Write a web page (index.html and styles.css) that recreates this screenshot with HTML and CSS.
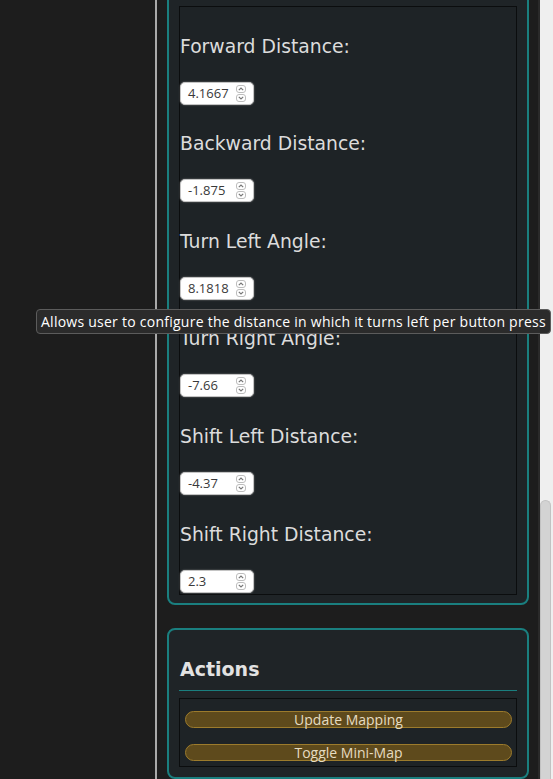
FILE: index.html
```html
<!DOCTYPE html>
<html lang="en">
<head>
<meta charset="utf-8">
<title>Settings</title>
<link rel="stylesheet" href="styles.css">
</head>
<body>
<div class="app">
  <aside class="side"></aside>
  <div class="divider"></div>
  <main class="main">
    <section class="card card-settings">
      <div class="box fields">
        <div class="field">
          <label class="label">Forward Distance:</label>
          <div class="num"><span class="num-val">4.1667</span><span class="spin"><span class="spin-btn"><svg viewBox="0 0 6 4" class="chev"><path d="M0.8 3.2 L3 1 L5.2 3.2"/></svg></span><span class="spin-btn"><svg viewBox="0 0 6 4" class="chev"><path d="M0.8 0.8 L3 3 L5.2 0.8"/></svg></span></span></div>
        </div>
        <div class="field">
          <label class="label">Backward Distance:</label>
          <div class="num"><span class="num-val">-1.875</span><span class="spin"><span class="spin-btn"><svg viewBox="0 0 6 4" class="chev"><path d="M0.8 3.2 L3 1 L5.2 3.2"/></svg></span><span class="spin-btn"><svg viewBox="0 0 6 4" class="chev"><path d="M0.8 0.8 L3 3 L5.2 0.8"/></svg></span></span></div>
        </div>
        <div class="field">
          <label class="label">Turn Left Angle:</label>
          <div class="num"><span class="num-val">8.1818</span><span class="spin"><span class="spin-btn"><svg viewBox="0 0 6 4" class="chev"><path d="M0.8 3.2 L3 1 L5.2 3.2"/></svg></span><span class="spin-btn"><svg viewBox="0 0 6 4" class="chev"><path d="M0.8 0.8 L3 3 L5.2 0.8"/></svg></span></span></div>
        </div>
        <div class="field">
          <label class="label">Turn Right Angle:</label>
          <div class="num"><span class="num-val">-7.66</span><span class="spin"><span class="spin-btn"><svg viewBox="0 0 6 4" class="chev"><path d="M0.8 3.2 L3 1 L5.2 3.2"/></svg></span><span class="spin-btn"><svg viewBox="0 0 6 4" class="chev"><path d="M0.8 0.8 L3 3 L5.2 0.8"/></svg></span></span></div>
        </div>
        <div class="field">
          <label class="label">Shift Left Distance:</label>
          <div class="num"><span class="num-val">-4.37</span><span class="spin"><span class="spin-btn"><svg viewBox="0 0 6 4" class="chev"><path d="M0.8 3.2 L3 1 L5.2 3.2"/></svg></span><span class="spin-btn"><svg viewBox="0 0 6 4" class="chev"><path d="M0.8 0.8 L3 3 L5.2 0.8"/></svg></span></span></div>
        </div>
        <div class="field">
          <label class="label">Shift Right Distance:</label>
          <div class="num"><span class="num-val">2.3</span><span class="spin"><span class="spin-btn"><svg viewBox="0 0 6 4" class="chev"><path d="M0.8 3.2 L3 1 L5.2 3.2"/></svg></span><span class="spin-btn"><svg viewBox="0 0 6 4" class="chev"><path d="M0.8 0.8 L3 3 L5.2 0.8"/></svg></span></span></div>
        </div>
      </div>
    </section>
    <section class="card card-actions">
      <h3 class="card-title">Actions</h3>
      <hr class="rule">
      <div class="box buttons">
        <button class="btn">Update Mapping</button>
        <button class="btn">Toggle Mini-Map</button>
      </div>
    </section>
  </main>
  <div class="scrollbar"><div class="track-space"></div><div class="thumb"></div></div>
</div>
<div class="tooltip">Allows user to configure the distance in which it turns left per button press</div>
</body>
</html>
```

FILE: styles.css
```css
* { box-sizing: border-box; }
html, body {
  margin: 0;
  padding: 0;
  height: 100%;
  overflow: hidden;
  background: #1d1d1d;
}
.app {
  display: flex;
  height: 779px;
  position: relative;
}
.side {
  width: 155px;
  flex: none;
  background: #1d1d1d;
}
.divider {
  width: 2px;
  flex: none;
  background: #a9a9a9;
}
.main {
  flex: 1;
  background: #1d1d1d;
  padding: 0 9px 0 10px;
  overflow: hidden;
}
.card {
  border: 2px solid #1a7f7f;
  border-radius: 8px;
  background: #1f2427;
  padding: 0 10px;
}
.card-settings {
  margin-top: -20px;
  padding-top: 24px;
  padding-bottom: 8px;
}
.box {
  border: 1px solid #0b0d0e;
  background: #1e2326;
}
.fields {
  display: flex;
  flex-direction: column;
  padding: 0 0 1px 0;
}
.field {
  display: flex;
  flex-direction: column;
  align-items: flex-start;
  padding-top: 28.6px;
}
.label {
  font-family: "DejaVu Sans", sans-serif;
  font-size: 18.8px;
  line-height: 22px;
  color: #dcdcdc;
}
.num {
  margin-top: 24px;
  width: 74px;
  height: 23px;
  background: #ffffff;
  border: 1px solid #c4c4c4;
  border-radius: 5px;
  box-shadow: 0 0 1.5px #9a9a9a;
  display: flex;
  align-items: center;
  justify-content: space-between;
  padding: 0 7px 0 7px;
}
.num-val {
  font-family: "Open Sans", sans-serif;
  font-size: 13px;
  color: #3a3a3a;
  line-height: 15px;
}
.spin {
  display: flex;
  flex-direction: column;
  gap: 1px;
}
.spin-btn {
  width: 10px;
  height: 8px;
  border: 1px solid #bdbdbd;
  border-radius: 3px;
  display: flex;
  align-items: center;
  justify-content: center;
}
.chev {
  width: 6px;
  height: 4px;
  fill: none;
  stroke: #777;
  stroke-width: 1.2;
}
.card-actions {
  margin-top: 23px;
  padding-bottom: 10px;
}
.card-title {
  margin: 28.6px 0 0 1px;
  font-family: "DejaVu Sans", sans-serif;
  font-weight: bold;
  font-size: 19px;
  line-height: 22px;
  color: #e2e2e2;
}
.rule {
  margin: 10px 0 0 0;
  border: none;
  height: 1px;
  background: #1a7f7f;
}
.buttons {
  margin-top: 7px;
  display: flex;
  flex-direction: column;
  gap: 16px;
  padding: 12px 4px 5px 5px;
}
.btn {
  height: 17px;
  margin: 0;
  padding: 0;
  border: 1px solid #9c7b2c;
  border-radius: 9px;
  background: #5e4a1c;
  color: #e6dcc2;
  font-family: "Open Sans", sans-serif;
  font-size: 14px;
  line-height: 15px;
  text-align: center;
}
.scrollbar {
  width: 15px;
  flex: none;
  background: #efefef;
  border-left: 2px solid #2a2a2a;
  display: flex;
  flex-direction: column;
}
.track-space {
  height: 500px;
  flex: none;
}
.thumb {
  flex: 1;
  margin-right: 2px;
  background: #d3d3d3;
  border: 1px solid #c2c2c2;
  border-bottom: none;
  border-radius: 6px 6px 0 0;
}
.tooltip {
  position: absolute;
  left: 36px;
  top: 309px;
  padding: 3px 4px;
  background: #2b2b2b;
  border: 1px solid #5c5c5c;
  border-radius: 4px;
  color: #ffffff;
  font-family: "Open Sans", sans-serif;
  font-size: 14px;
  letter-spacing: 0.25px;
  line-height: 17px;
  white-space: nowrap;
}
```
